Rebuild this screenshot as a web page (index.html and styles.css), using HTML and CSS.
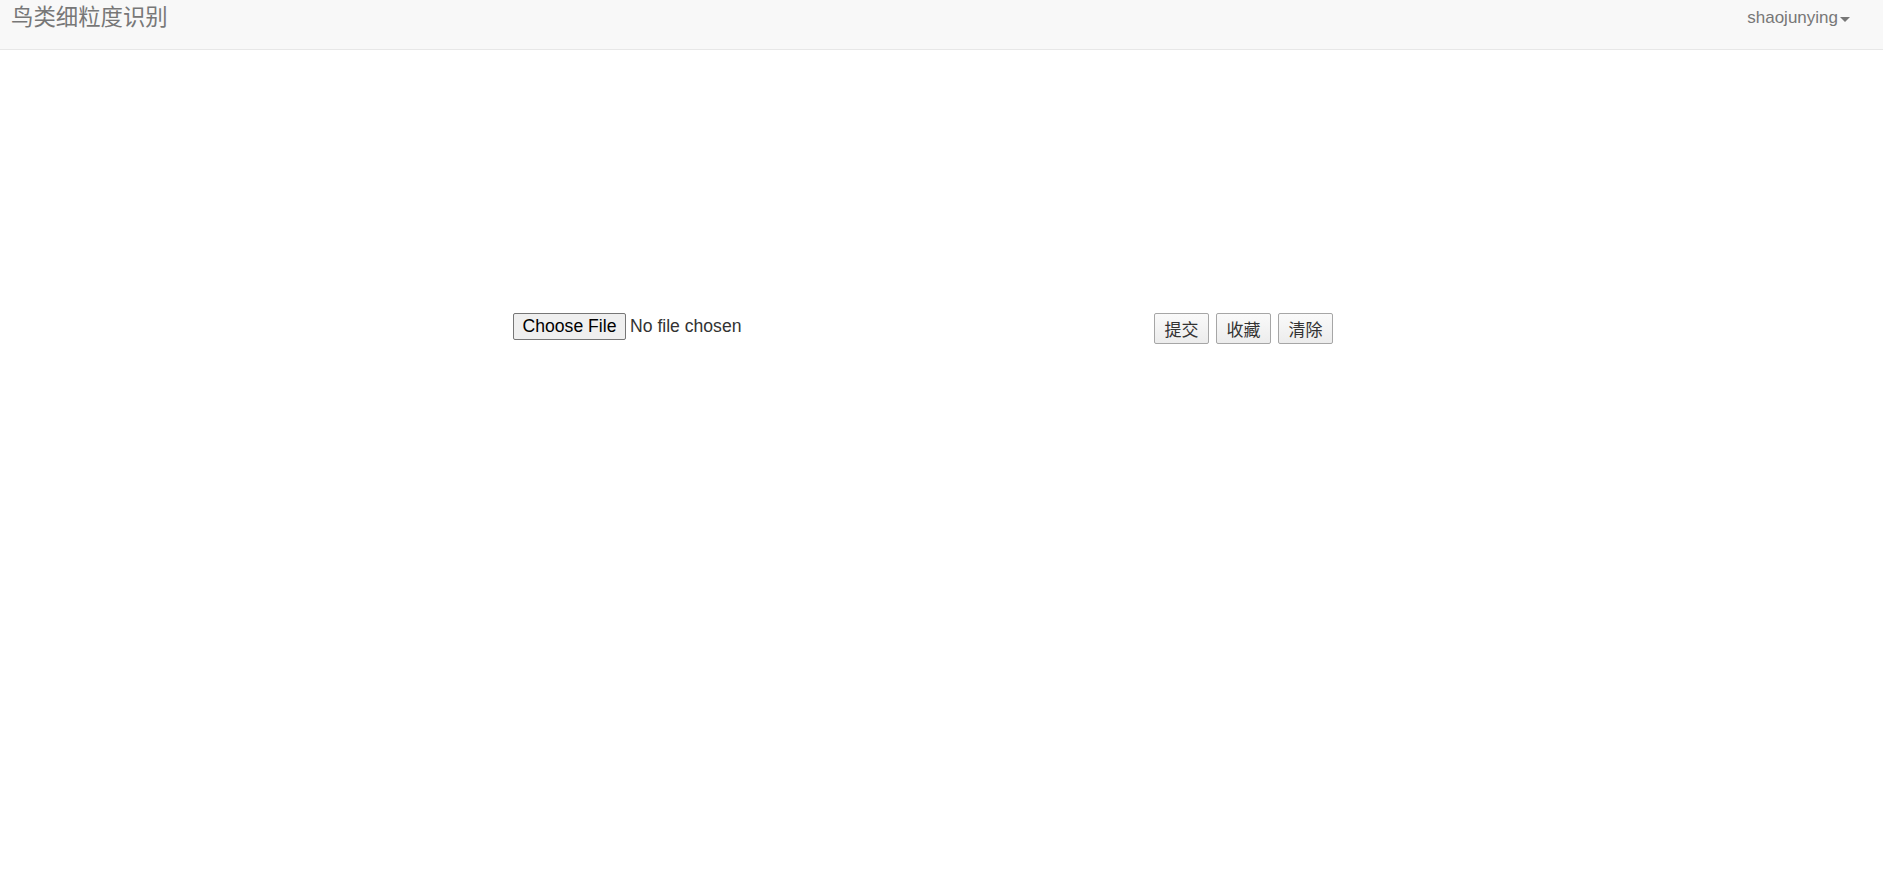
FILE: index.html
```html
<!DOCTYPE html>
<html lang="zh">
<head>
<meta charset="utf-8">
<title>鸟类细粒度识别</title>
<link rel="stylesheet" href="styles.css">
</head>
<body>
<nav class="navbar">
  <a class="brand" href="#">鸟类细粒度识别</a>
  <a class="user" href="#">shaojunying<span class="caret"></span></a>
</nav>
<main class="main">
  <div class="row">
    <div class="col">
      <input class="file" type="file">
    </div>
    <div class="col">
      <button class="btn">提交</button>
      <button class="btn">收藏</button>
      <button class="btn">清除</button>
    </div>
  </div>
</main>
</body>
</html>
```
FILE: styles.css
```css
html, body {
  margin: 0;
  padding: 0;
  background: #fff;
  font-family: "Liberation Sans", Arial, "Noto Sans CJK SC", sans-serif;
  font-size: 17px;
  color: #333;
}
.navbar {
  height: 49px;
  background: #f8f8f8;
  border-bottom: 1px solid #e7e7e7;
  display: flex;
  justify-content: space-between;
  align-items: flex-start;
}
.brand {
  font-family: "Noto Sans CJK SC", sans-serif;
  font-size: 22.4px;
  line-height: 30px;
  color: #777;
  text-decoration: none;
  padding-left: 11px;
  margin-top: 0;
}
.user {
  color: #777;
  text-decoration: none;
  font-size: 17px;
  line-height: 20px;
  padding-top: 8px;
  padding-right: 33px;
  display: flex;
  align-items: center;
}
.caret {
  display: inline-block;
  width: 0;
  height: 0;
  margin-left: 2px;
  margin-top: 2px;
  border-top: 5px solid #777;
  border-left: 5px solid transparent;
  border-right: 5px solid transparent;
}
.main {
  padding-top: 263px;
  padding-left: 513px;
}
.row {
  display: grid;
  grid-template-columns: 641px 641px;
  align-items: start;
}
.file {
  font-family: "Liberation Sans", Arial, sans-serif;
  font-size: 17.6px;
  color: #333;
  margin: 0;
}
.file::file-selector-button {
  font-family: "Liberation Sans", Arial, sans-serif;
  font-size: 17.6px;
  height: 27px;
  width: 113px;
  padding: 0 6px;
  margin-right: 4px;
  color: #000;
  background: #efefef;
  border: 1px solid #767676;
  border-radius: 2px;
}
.col {
  display: flex;
  gap: 7px;
}
.btn {
  font-family: "Noto Sans CJK SC", sans-serif;
  font-size: 17px;
  color: #333;
  width: 55px;
  height: 31px;
  padding: 0;
  background: linear-gradient(#fafafa, #ececec);
  border: 1px solid #a6a6a6;
  border-radius: 2px;
}
```
